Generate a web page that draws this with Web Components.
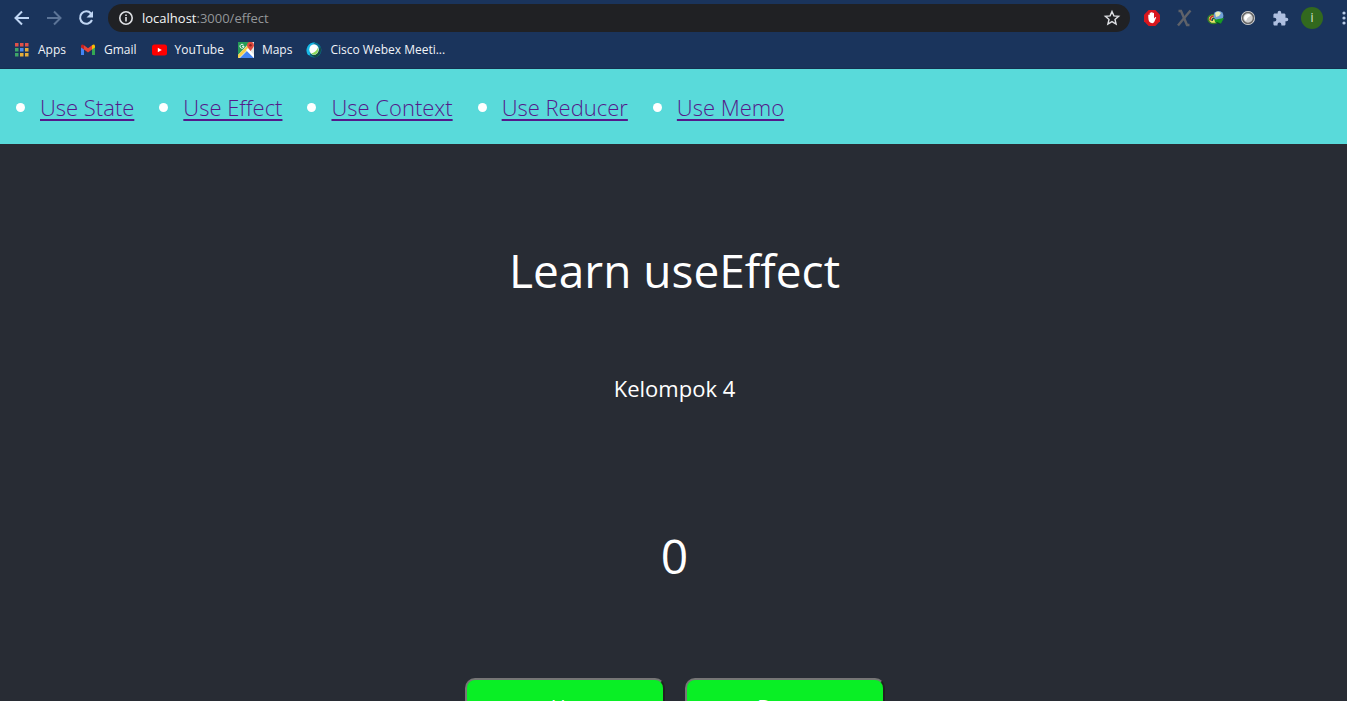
<!DOCTYPE html>
<html lang="en">
<head>
<meta charset="utf-8">
<title>React App</title>
<style>
html,body{margin:0;height:100%;background:#282c34}
body{overflow:hidden;font-family:"Open Sans","Noto Sans",sans-serif;color:#fff}
</style>
</head>
<body>
<browser-shell>
  <tool-bar slot="chrome"></tool-bar>
  <bookmark-bar slot="chrome"></bookmark-bar>
  <hook-nav></hook-nav>
  <effect-page>
    <span slot="title">Learn useEffect</span>
    <span slot="group">Kelompok 4</span>
    <app-button slot="actions">Up</app-button>
    <app-button slot="actions">Down</app-button>
  </effect-page>
</browser-shell>
<script>
function define(name, html, setup) {
  customElements.define(name, class extends HTMLElement {
    constructor() {
      super();
      const t = document.createElement('template');
      t.innerHTML = html;
      this.attachShadow({mode: 'open'}).append(t.content.cloneNode(true));
      if (setup) setup(this.shadowRoot);
    }
  });
}

define('browser-shell', `
<style>
:host{display:flex;flex-direction:column;height:100vh}
header{flex:none;background:#1a345c;border-bottom:1px solid #15304f}
main{flex:1;min-height:0;overflow:hidden;background:#282c34}
</style>
<header><slot name="chrome"></slot></header>
<main><slot></slot></main>`);

define('tool-bar', `
<style>
:host{display:block;height:36px;overflow:hidden}
.row{display:flex;align-items:center;height:36px;padding-left:12px}
button{flex:none;display:flex;align-items:center;justify-content:center;width:20px;height:20px;padding:0;border:0;background:none;color:inherit}
.nav{display:flex;gap:12px;color:#c0d6f4}
.dim{color:#5c7497}
form{flex:1;min-width:0;display:flex;align-items:center;gap:6px;height:28px;margin:0 12px;padding:0 8px;border-radius:14px;background:#202124;color:#dfe1e5}
.url{flex:1;min-width:0;font-size:13px;line-height:18px;white-space:nowrap}
a{color:#939699;text-decoration:none}
b{font-weight:400;color:#f4f5f6}
.ext{display:flex;align-items:center;gap:12px;flex:none}
.ext .avatar{width:22px;height:22px;margin:0 -1px;border-radius:50%;background:#32691e;color:#dce8d6;font:12px/22px "Open Sans",sans-serif}
.menu{margin-right:-7px;color:#b7cae6}
svg{display:block;flex:none}
</style>
<div class="row">
<div class="nav">
<button aria-label="Back"><svg width="20" height="20" viewBox="0 0 20 20" fill="none" stroke="currentColor" stroke-width="2"><path d="M17 10H4M10 3.500 3.500 10l6.500 6.500"/></svg></button>
<button class="dim" aria-label="Forward"><svg width="20" height="20" viewBox="0 0 20 20" fill="none" stroke="currentColor" stroke-width="2"><path d="M3 10h13M10 3.500 16.500 10 10 16.500"/></svg></button>
<button aria-label="Reload"><svg width="20" height="20" viewBox="0 0 20 20"><path d="M15 5.500A6.200 6.200 0 1 0 16 12" fill="none" stroke="currentColor" stroke-width="2"/><path d="M17 3v6.500h-6.500z" fill="currentColor"/></svg></button>
</div>
<form>
<svg width="20" height="20" viewBox="0 0 20 20"><circle cx="10" cy="10" r="6.200" fill="none" stroke="currentColor" stroke-width="1.600"/><path d="M9.200 9h1.600v4.500H9.200zM9.200 6.400h1.600V8H9.200z" fill="currentColor"/></svg>
<div class="url"><a href="#/effect"><b>localhost</b>:3000/effect</a></div>
<button type="button" aria-label="Bookmark this tab"><svg width="20" height="20" viewBox="0 0 20 20"><path d="m10 3.600 1.900 4.300 4.700.4-3.600 3.100 1.100 4.600-4.100-2.400L5.900 16 7 11.400 3.400 8.300l4.700-.4z" fill="none" stroke="currentColor" stroke-width="1.400"/></svg></button>
</form>
<div class="ext">
<button aria-label="Ad blocker"><svg width="20" height="20" viewBox="0 0 20 20"><path d="M6.700 2h6.600L18 6.700v6.600L13.300 18H6.700L2 13.300V6.700z" fill="#d8161d"/><path d="M6.300 9.500V7q.7-1 1.400 0v2V5q.7-1 1.400 0v3.500-4q.8-1 1.500 0v4V5.300q.8-1 1.400 0v5.200l1.100-1.300q1-.4 1.100.4l-2 4.400Q11.500 15.500 9.500 15q-3-.5-3.200-5.500z" fill="#fff"/></svg></button>
<button aria-label="X extension"><svg width="20" height="20" viewBox="0 0 20 20" fill="none" stroke="#5f6269"><path d="M4.500 3H7l6 14h2.500" stroke-width="2.400"/><path d="M16.500 2.500 4 17.500" stroke-width="2.400"/></svg></button>
<button aria-label="Download manager"><svg width="20" height="20" viewBox="0 0 20 20"><ellipse cx="7.500" cy="11" rx="5.500" ry="4.600" fill="#ece36a" stroke="#347d28" stroke-width="1.500"/><path d="M4 12.500q0-5 5-4.500" stroke="#c42e25" stroke-width="1.600" fill="none"/><path d="M6 13q0-3 3-3" stroke="#245" stroke-width="1.500" fill="none"/><circle cx="12.500" cy="7.800" r="4.900" fill="#6f9fd6"/><path d="M9 5q3-3 6 0l-2 3-3 1z" fill="#e6edba"/><path d="m8 10 2 1.500 8-1.500-3 5.500L9 14z" fill="#169b22"/><path d="m9 14 3 .2 3 2.800z" fill="#0b5318"/></svg></button>
<button aria-label="Recorder"><svg width="20" height="20" viewBox="0 0 20 20"><circle cx="10" cy="10" r="7" fill="#ddd"/><circle cx="10" cy="10" r="5.500" fill="#d0d0d0" stroke="#686868" stroke-width="1.500"/><path d="M6 10a4 4 0 0 1 7-2.500Q9.500 9 8 13A4 4 0 0 1 6 10z" fill="#fff"/></svg></button>
<button aria-label="Extensions"><svg width="17" height="17" viewBox="0 0 24 24" fill="#aebfe0"><path d="M20.500 11H19V7c0-1.100-.9-2-2-2h-4V3.500a2.500 2.500 0 0 0-5 0V5H4c-1.100 0-2 .9-2 2v3.800h1.500a2.700 2.700 0 0 1 0 5.400H2V20c0 1.100.9 2 2 2h3.800v-1.500a2.700 2.700 0 0 1 5.400 0V22H17c1.100 0 2-.9 2-2v-4h1.500a2.500 2.500 0 0 0 0-5z"/></svg></button>
<button class="avatar" aria-label="Profile">i</button>
<button class="menu" aria-label="Menu"><svg width="20" height="20" viewBox="0 0 20 20" fill="currentColor"><circle cx="10" cy="5" r="1.600"/><circle cx="10" cy="10" r="1.600"/><circle cx="10" cy="15" r="1.600"/></svg></button>
</div>
</div>`);

define('bookmark-bar', `
<style>
:host{display:block}
nav{display:flex;align-items:center;gap:14px;height:32px;padding:0 14px 4px;box-sizing:border-box}
a{display:flex;align-items:center;gap:8px;color:#f0f3f8;text-decoration:none;font-size:12px;line-height:16px;white-space:nowrap}
svg{display:block;flex:none}
</style>
<nav>
<a href="#apps"><svg width="16" height="16" viewBox="0 0 16 16"><path d="M1 1h3.500v3.500H1zM6 1h3.500v3.500H6zM11 1h3.500v3.500H11z" fill="#df5149"/><path d="M1 6h3.500v3.500H1z" fill="#3fa568"/><path d="M6 6h3.500v3.500H6z" fill="#4b8cec"/><path d="M11 6h3.500v3.500H11z" fill="#e4ad3a"/><path d="M1 11h3.500v3.500H1z" fill="#3fa568"/><path d="M6 11h3.500v3.500H6zM11 11h3.500v3.500H11z" fill="#e4ad3a"/></svg>Apps</a>
<a href="#gmail"><svg width="16" height="16" viewBox="0 0 16 16"><path d="M1 4v9h3V7z" fill="#4285f4"/><path d="M12 7v6h3V4z" fill="#34a853"/><path d="M4 3.200v4.300l4 3 4-3V3.200l-4 3z" fill="#ea4335"/><path d="M1 4v1.500l3 2V3.200Q1.500 1.500 1 4z" fill="#c5221f"/><path d="M15 4v1.500l-3 2V3.200Q14.500 1.500 15 4z" fill="#fbbc04"/></svg>Gmail</a>
<a href="#youtube"><svg width="16" height="16" viewBox="0 0 16 16"><rect x="1" y="2.500" width="15" height="11" rx="2.500" fill="#f00"/><path d="m6.800 5.700 4 2.300-4 2.300z" fill="#fff"/></svg>YouTube</a>
<a href="#maps"><svg width="16" height="16" viewBox="0 0 16 16"><path d="M0 0h16v16H0z" fill="#e4e5e1"/><path d="M0 0h12L0 13z" fill="#269b57"/><path d="M2 16 9 9l7 7z" fill="#4285f4"/><path d="m0 13 11-11 2 2L1 16H0z" fill="#f5ce49"/><path d="m8 8 8 8v-3L10 6z" fill="#fff"/><path d="M12.500 9Q9 5 9 3.300a3.500 3.500 0 0 1 7 0Q16 5 12.500 9z" fill="#df493e"/><circle cx="12.500" cy="3.300" r="1.200" fill="#8c251e"/><path d="M5.500 3A2 2 0 1 0 6 4.300H4" fill="none" stroke="#fff"/></svg>Maps</a>
<a href="#webex"><svg width="16" height="16" viewBox="0 0 16 16"><circle cx="8" cy="8" r="7.500" fill="#087496"/><path d="M2 13A8 8 0 0 1 9 .5Q3 5 4 13z" fill="#18b8e6"/><path d="M4 12q5 3 8-2t1-7q4 5 0 10t-9-1z" fill="#164b42"/><ellipse cx="8" cy="7.500" rx="4.700" ry="5.200" fill="#fff"/><path d="M5 11.500q5-1 7-6 1 6-3 7-2 .5-4-1z" fill="#8ed95b"/></svg>Cisco Webex Meeti...</a>
</nav>`);

define('hook-nav', `
<style>
:host{display:block;background:#59dada}
ul{display:flex;gap:49px;margin:0;padding:24px 40px 23px;list-style:disc;font-size:22px;line-height:27px;font-weight:350}
li::marker{color:#fff;font-size:24px}
a{color:#551a8b;text-decoration-thickness:2px;text-underline-offset:3px}
</style>
<nav><ul>
<li><a href="#/state">Use State</a></li>
<li><a href="#/effect">Use Effect</a></li>
<li><a href="#/context">Use Context</a></li>
<li><a href="#/reducer">Use Reducer</a></li>
<li><a href="#/memo">Use Memo</a></li>
</ul></nav>`);

define('effect-page', `
<style>
:host{display:flex;flex-direction:column;align-items:center;padding:94px 0 40px 2px;text-align:center}
h1,p,output{display:block;margin:0;font-weight:400}
h1,output{line-height:64px}
h1{font-size:46px}
p{margin-top:70px;font-size:22px;line-height:32px}
output{margin-top:120px;font-size:48px}
.actions{display:flex;gap:20px;margin-top:90px}
</style>
<h1><slot name="title"></slot></h1>
<p><slot name="group"></slot></p>
<output>0</output>
<div class="actions"><slot name="actions"></slot></div>`, root => {
  let count = 0;
  root.addEventListener('click', e => {
    const label = e.target.textContent;
    if (label === 'Up') count++;
    else if (label === 'Down') count--;
    root.querySelector('output').textContent = count;
  });
});

define('app-button', `
<style>
:host{display:block}
button{display:block;width:200px;height:58px;padding:0;border:2px outset #767676;border-radius:10px;background:#09ef25;color:#fff;font:20px/28px "Open Sans","Noto Sans",sans-serif}
</style>
<button type="button"><slot></slot></button>`);
</script>
</body>
</html>
